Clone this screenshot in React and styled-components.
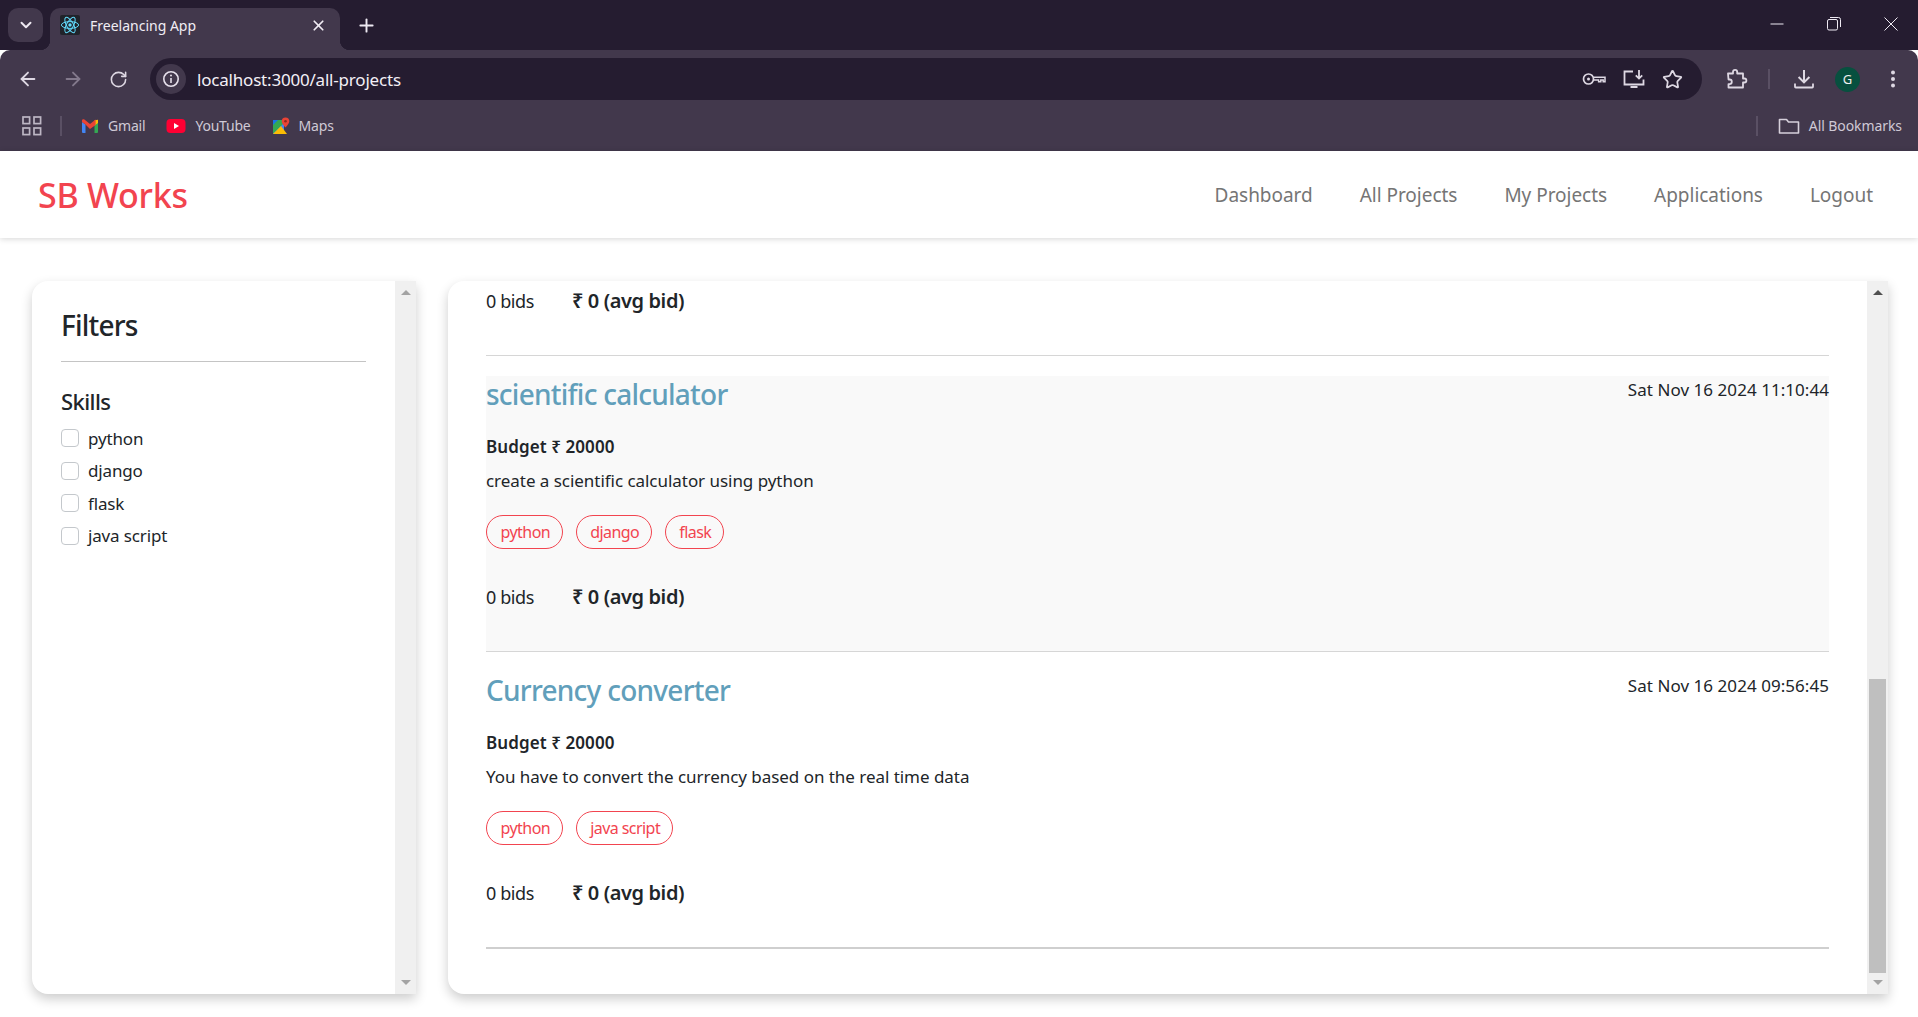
import React from "react";
import styled, { createGlobalStyle } from "styled-components";
import { ChevronDown, X, Plus, ArrowLeft, ArrowRight, RotateCw, Star } from "lucide-react";

const Global = createGlobalStyle`
  html, body { margin: 0; padding: 0; height: 100%; overflow: hidden; background: #fff; }
  * { box-sizing: border-box; }
  body { font-family: "Noto Sans", "Open Sans", sans-serif; color: #212529; }
`;

const Page = styled.div`width: 1918px; height: 1017px; display: flex; flex-direction: column; overflow: hidden;`;

const TabStrip = styled.div`height: 50px; background: #251c30; display: flex; align-items: flex-end; padding-left: 8px; flex: none;`;
const TabSearch = styled.div`width: 35px; height: 34px; margin-bottom: 8px; border-radius: 10px; background: #42384c; color: #eee9f2; display: flex; align-items: center; justify-content: center;`;
const Tab = styled.div`
  position: relative; width: 290px; height: 42px; margin-left: 7px; background: #42384c; border-radius: 10px 10px 0 0;
  display: flex; align-items: center; padding: 0 13px 8px 10px; color: #f1edf4; font-size: 14px;
  &::before, &::after { content: ""; position: absolute; bottom: 0; width: 10px; height: 10px; }
  &::before { left: -10px; background: radial-gradient(circle at 0 0, #251c30 10px, #42384c 10.5px); }
  &::after { right: -10px; background: radial-gradient(circle at 100% 0, #251c30 10px, #42384c 10.5px); }
`;
const Favicon = styled.div`width: 20px; height: 20px; background: #20232a; border-radius: 2px; margin-right: 10px; display: flex; flex: none;`;
const TabTitle = styled.span`flex: 1; letter-spacing: 0; white-space: nowrap;`;
const NewTab = styled.div`margin: 0 0 13px 14px; width: 24px; height: 24px; color: #eee9f2; display: flex; align-items: center; justify-content: center;`;
const WindowControls = styled.div`margin-left: auto; height: 50px; display: flex; align-items: center; gap: 43px; padding: 0 20px 2px 0; color: #efeaf3;`;

const Toolbar = styled.div`height: 50px; flex: none; background: #42384c; border-radius: 10px 10px 0 0; display: flex; align-items: center; padding: 8px 0 0 16px;`;
const NavIcon = styled.div`width: 24px; height: 24px; margin-right: 21px; display: flex; align-items: center; justify-content: center; color: ${p => p.$dim ? "#83798c" : "#ded8e3"};`;
const Omnibox = styled.div`width: 1552px; height: 42px; margin-left: -1px; background: #251c30; border-radius: 21px; display: flex; align-items: center; padding: 0 19px 0 6px; color: #d9d3de;`;
const InfoBadge = styled.div`width: 30px; height: 30px; border-radius: 50%; background: #42384c; display: flex; align-items: center; justify-content: center; flex: none;`;
const Url = styled.span`margin-left: 11px; font-size: 17px; color: #f3eff6; flex: 1; letter-spacing: -0.2px; white-space: nowrap;`;
const OmniIcons = styled.div`display: flex; align-items: center; gap: 16px;`;
const ToolIcons = styled.div`display: flex; align-items: center; color: #ded8e3; margin-left: 22px;`;
const VDivider = styled.div`width: 2px; height: 20px; background: #5a5064; flex: none; margin: ${p => p.$m};`;
const Spacer = styled.span`width: ${p => p.$w}px; flex: none;`;
const Avatar = styled.div`width: 25px; height: 25px; border-radius: 50%; background: #07503f; color: #f0f0f0; font-size: 13px; display: flex; align-items: center; justify-content: center;`;

const Bookmarks = styled.div`height: 51px; flex: none; background: #42384c; display: flex; align-items: center; padding: 0 16px 0 22px; color: #cfc9d5; font-size: 14px; letter-spacing: -0.2px;`;
const Bookmark = styled.div`display: flex; align-items: center; gap: 9px; margin-right: 21px; white-space: nowrap;`;
const BookmarkEnd = styled.div`margin-left: auto; display: flex; align-items: center; gap: 9px; white-space: nowrap; letter-spacing: -0.08px;`;

const Navbar = styled.nav`height: 87px; flex: none; background: #fff; box-shadow: 0 1px 6px rgba(0,0,0,.16); display: flex; align-items: center; justify-content: space-between; padding: 0 45px 0 38px; position: relative;`;
const Brand = styled.div`font-size: 34px; font-weight: 500; color: #f2444f; letter-spacing: -0.25px;`;
const NavLinks = styled.div`display: flex; gap: 47px;`;
const NavLink = styled.a`font-size: 19px; color: #757575; letter-spacing: -0.03px; white-space: nowrap;`;

const Main = styled.main`flex: 1; display: flex; gap: 32px; padding: 43px 30px 23px 32px; min-height: 0;`;
const Card = styled.section`display: flex; height: 713px; background: #fff; border-radius: 16px 0 0 16px; box-shadow: 0 5px 12px rgba(0,0,0,.2); overflow: hidden; width: ${p => p.$w}px; flex: none;`;
const CardBody = styled.div`flex: 1; min-width: 0; overflow: hidden; padding: ${p => p.$pad};`;
const Scrollbar = styled.div`width: 21px; flex: none; background: #f0f0f0; display: flex; flex-direction: column; padding: 2px 0;`;
const ArrowBtn = styled.div`height: 19px; flex: none; display: flex; align-items: center; justify-content: center;`;
const Arrow = styled.i`
  width: 0; height: 0; border-left: 5px solid transparent; border-right: 5px solid transparent;
  ${p => p.$down ? `border-top: 5px solid ${p.$c};` : `border-bottom: 5px solid ${p.$c};`}
`;
const Track = styled.div`flex: 1; display: flex; flex-direction: column; justify-content: flex-end; padding: 0 2px;`;
const Thumb = styled.div`height: 294px; background: #bfbfbf;`;

const FilterTitle = styled.h3`margin: 0; font-size: 28px; line-height: 34px; font-weight: 500; letter-spacing: -0.8px;`;
const Rule = styled.hr`margin: 19px 0 26px; border: 0; height: 1px; background: #c4c4c4;`;
const SkillHead = styled.h5`margin: 0 0 8px; font-size: 22px; line-height: 26px; font-weight: 500; letter-spacing: -0.6px;`;
const CheckRow = styled.label`display: flex; align-items: center; height: 32.5px; font-size: 17px; letter-spacing: -0.15px; gap: 9px;`;
const Check = styled.span`width: 18px; height: 18px; border: 1px solid #c4c8cc; border-radius: 4px; background: #fff; flex: none;`;

const BidsRow = styled.div`display: flex; align-items: center; height: 27px; gap: 38px;`;
const BidCount = styled.span`font-size: 18px; letter-spacing: -0.4px; white-space: nowrap;`;
const AvgBid = styled.b`font-size: 20px; font-weight: 600; letter-spacing: -0.4px; white-space: nowrap;`;
const ItemRule = styled.hr`margin: 41px 0 20px; border: 0; height: ${p => p.$h || 1}px; background: ${p => p.$c || "#d6d6d6"};`;
const Project = styled.article`background: ${p => p.$hover ? "#f9f9f9" : "transparent"};`;
const ProjectHead = styled.div`display: flex; justify-content: space-between; align-items: flex-start; height: 34px;`;
const ProjectTitle = styled.h3`margin: 0; font-size: 28px; line-height: 36px; font-weight: 500; color: #619fbb; letter-spacing: -0.75px; white-space: nowrap;`;
const ProjectDate = styled.span`font-size: 17px; line-height: 27px; letter-spacing: 0.05px; white-space: nowrap;`;
const Budget = styled.h6`margin: 25px 0 10px; font-size: 17px; line-height: 24px; font-weight: 600; letter-spacing: 0.08px;`;
const Desc = styled.p`margin: 0 0 22px; font-size: 17px; line-height: 24px; letter-spacing: -0.04px;`;
const Tags = styled.div`display: flex; gap: 12.5px; margin-bottom: 34px;`;
const Tag = styled.span`height: 34px; padding: 0 12px 0 13.5px; border: 1px solid #f2444f; border-radius: 17px; color: #f2444f; font-size: 16px; display: flex; align-items: center; letter-spacing: -0.55px; white-space: nowrap;`;

const Svg = ({ s = 20, vb = "0 0 24 24", children, ...r }) => <svg width={s} height={s} viewBox={vb} fill="none" {...r}>{children}</svg>;

const ReactIcon = () => (
  <Svg s={20} vb="0 0 20 20">
    <g stroke="#61dafb" strokeWidth="1" fill="none">
      <ellipse cx="10" cy="10" rx="8.6" ry="3.4" />
      <ellipse cx="10" cy="10" rx="8.6" ry="3.4" transform="rotate(60 10 10)" />
      <ellipse cx="10" cy="10" rx="8.6" ry="3.4" transform="rotate(120 10 10)" />
    </g>
    <circle cx="10" cy="10" r="1.7" fill="#61dafb" />
  </Svg>
);
const Info = () => (
  <Svg s={18} vb="0 0 18 18">
    <circle cx="9" cy="9" r="7.2" stroke="#e6e0eb" strokeWidth="1.6" />
    <path d="M9 8v5" stroke="#e6e0eb" strokeWidth="1.6" />
    <circle cx="9" cy="5.6" r="1" fill="#e6e0eb" />
  </Svg>
);
const KeyIcon = () => (
  <Svg s={24} vb="0 0 24 24">
    <circle cx="6.5" cy="12" r="5" stroke="#ded8e3" strokeWidth="1.7" />
    <circle cx="6.5" cy="12" r="1.5" fill="#ded8e3" />
    <path d="M11.5 10.2H23v4.6h-1.8V13h-2.4v1.8h-2.2V13h-5" stroke="#ded8e3" strokeWidth="1.5" />
  </Svg>
);
const InstallIcon = () => (
  <Svg s={24} vb="0 0 24 24">
    <path d="M11 4.5H2.5v13h19v-5M8.5 20h7" stroke="#ded8e3" strokeWidth="1.8" />
    <path d="M17 3v8.5M13.8 8.4l3.2 3.2 3.2-3.2" stroke="#ded8e3" strokeWidth="1.8" />
  </Svg>
);
const PuzzleIcon = () => (
  <Svg s={24} vb="0 0 24 24">
    <path d="M4 6.5h5V5a2.1 2.1 0 0 1 4.2 0v1.5H19v5h1.4a2 2 0 0 1 0 4H19v5H4.5v-3.4h1a2.3 2.3 0 0 0 0-4.6h-1z" stroke="#ded8e3" strokeWidth="1.8" strokeLinejoin="round" />
  </Svg>
);
const DownloadBar = () => (
  <Svg s={24} vb="0 0 24 24">
    <path d="M12 3v12M6.6 10l5.4 5.4 5.4-5.4" stroke="#ded8e3" strokeWidth="2" />
    <path d="M3 16.5v3.2a.8.8 0 0 0 .8.8h16.4a.8.8 0 0 0 .8-.8v-3.2" stroke="#ded8e3" strokeWidth="1.8" />
  </Svg>
);
const DotsIcon = () => (
  <Svg s={24} vb="0 0 24 24">
    <circle cx="12" cy="5.5" r="2" fill="#ded8e3" />
    <circle cx="12" cy="12" r="2" fill="#ded8e3" />
    <circle cx="12" cy="18.5" r="2" fill="#ded8e3" />
  </Svg>
);
const AppsIcon = () => (
  <Svg s={20} vb="0 0 20 20">
    {[[1, 1], [12, 1], [1, 12], [12, 12]].map(([x, y]) => (
      <rect key={x + "-" + y} x={x} y={y} width="6.6" height="6.6" stroke="#bdb6c4" strokeWidth="1.7" />
    ))}
  </Svg>
);
const GmailIcon = () => (
  <Svg s={18} vb="0 0 18 18">
    <path d="M1 5v10a1 1 0 0 0 1 1h2.5V7.5z" fill="#4285f4" />
    <path d="M17 5v10a1 1 0 0 1-1 1h-2.5V7.5z" fill="#34a853" />
    <path d="M13.5 3.2 17 2.8V6l-3.5 2.5z" fill="#fbbc04" />
    <path d="M4.5 7.5 1 5V3.5C1 2.3 2.5 1.8 3.4 2.5L9 7l5.6-4.5V8L9 12z" fill="#ea4335" />
  </Svg>
);
const YouTubeIcon = () => (
  <Svg s={20} vb="0 0 20 20">
    <rect x="0.5" y="3" width="19" height="14" rx="4" fill="#ff0033" />
    <path d="M8 7v6l5-3z" fill="#fff" />
  </Svg>
);
const MapsIcon = () => (
  <Svg s={18} vb="0 0 18 18">
    <path d="M1 3h11v14H1z" fill="#34a853" />
    <path d="M1 17 12 6v11z" fill="#4285f4" />
    <path d="M1 3h5L1 8z" fill="#1a73e8" />
    <path d="M1 17 9 9l6 8z" fill="#fbbc04" />
    <path d="M13.5 0.5a3.8 3.8 0 0 1 3.8 3.8c0 2.6-3.8 6.2-3.8 6.2S9.7 6.9 9.7 4.3a3.8 3.8 0 0 1 3.8-3.8z" fill="#ea4335" />
    <circle cx="13.5" cy="4.3" r="1.3" fill="#8c2b20" />
  </Svg>
);
const FolderIcon = () => (
  <Svg s={22} vb="0 0 22 22">
    <path d="M1.5 4.5h7l2 2.5h10v11h-19z" stroke="#d6d0db" strokeWidth="1.6" strokeLinejoin="round" />
  </Svg>
);
const MinimizeIcon = () => <Svg s={14} vb="0 0 14 14"><path d="M0.5 7h13" stroke="#efeaf3" strokeWidth="1" /></Svg>;
const RestoreIcon = () => (
  <Svg s={14} vb="0 0 14 14">
    <rect x="0.5" y="2.5" width="10" height="10.5" rx="1.5" stroke="#efeaf3" />
    <path d="M3 0.5h8.5a2 2 0 0 1 2 2V10" stroke="#efeaf3" />
  </Svg>
);
const CloseIcon = () => <Svg s={14} vb="0 0 14 14"><path d="M0.5 0.5l13 13M13.5 0.5l-13 13" stroke="#efeaf3" strokeWidth="1" /></Svg>;

const BarSide = ({ thumb, dark }) => (
  <Scrollbar>
    <ArrowBtn><Arrow $c={dark ? "#505050" : "#a3a3a3"} /></ArrowBtn>
    <Track>{thumb && <Thumb />}</Track>
    <ArrowBtn><Arrow $down $c="#a3a3a3" /></ArrowBtn>
  </Scrollbar>
);

const Bids = () => (
  <BidsRow>
    <BidCount>0 bids</BidCount>
    <AvgBid>₹ 0 (avg bid)</AvgBid>
  </BidsRow>
);

const projects = [
  { title: "scientific calculator", date: "Sat Nov 16 2024 11:10:44", desc: "create a scientific calculator using python", tags: ["python", "django", "flask"], hover: true },
  { title: "Currency converter", date: "Sat Nov 16 2024 09:56:45", desc: "You have to convert the currency based on the real time data", tags: ["python", "java script"], last: true },
];

export default function App() {
  return (
    <Page>
      <Global />
      <TabStrip>
        <TabSearch><ChevronDown size={18} strokeWidth={2.6} /></TabSearch>
        <Tab>
          <Favicon><ReactIcon /></Favicon>
          <TabTitle>Freelancing App</TabTitle>
          <X size={17} strokeWidth={2.4} />
        </Tab>
        <NewTab><Plus size={21} strokeWidth={2.2} /></NewTab>
        <WindowControls><MinimizeIcon /><RestoreIcon /><CloseIcon /></WindowControls>
      </TabStrip>
      <Toolbar>
        <NavIcon><ArrowLeft size={22} strokeWidth={2} /></NavIcon>
        <NavIcon $dim><ArrowRight size={22} strokeWidth={2} /></NavIcon>
        <NavIcon><RotateCw size={19} strokeWidth={2} /></NavIcon>
        <Omnibox>
          <InfoBadge><Info /></InfoBadge>
          <Url>localhost:3000/all-projects</Url>
          <OmniIcons>
            <KeyIcon />
            <InstallIcon />
            <Star size={21} strokeWidth={2} color="#ded8e3" />
          </OmniIcons>
        </Omnibox>
        <ToolIcons>
          <PuzzleIcon />
          <VDivider $m="0 22px 0 20px" />
          <DownloadBar />
          <Spacer $w={19} />
          <Avatar>G</Avatar>
          <Spacer $w={21} />
          <DotsIcon />
        </ToolIcons>
      </Toolbar>
      <Bookmarks>
        <AppsIcon />
        <VDivider $m="0 19px 0 18px" />
        <Bookmark><GmailIcon />Gmail</Bookmark>
        <Bookmark><YouTubeIcon />YouTube</Bookmark>
        <Bookmark><MapsIcon />Maps</Bookmark>
        <BookmarkEnd>
          <VDivider $m="0 11px 0 0" />
          <FolderIcon />
          All Bookmarks
        </BookmarkEnd>
      </Bookmarks>
      <Navbar>
        <Brand>SB Works</Brand>
        <NavLinks>
          {["Dashboard", "All Projects", "My Projects", "Applications", "Logout"].map(l => <NavLink key={l}>{l}</NavLink>)}
        </NavLinks>
      </Navbar>
      <Main>
        <Card $w={384}>
          <CardBody $pad="27px 29px 0">
            <FilterTitle>Filters</FilterTitle>
            <Rule />
            <SkillHead>Skills</SkillHead>
            {["python", "django", "flask", "java script"].map(s => (
              <CheckRow key={s}><Check />{s}</CheckRow>
            ))}
          </CardBody>
          <BarSide />
        </Card>
        <Card $w={1440}>
          <CardBody $pad="6px 38px 0">
            <Bids />
            <ItemRule />
            {projects.map(p => (
              <Project key={p.title} $hover={p.hover}>
                <ProjectHead>
                  <ProjectTitle>{p.title}</ProjectTitle>
                  <ProjectDate>{p.date}</ProjectDate>
                </ProjectHead>
                <Budget>Budget ₹ 20000</Budget>
                <Desc>{p.desc}</Desc>
                <Tags>{p.tags.map(t => <Tag key={t}>{t}</Tag>)}</Tags>
                <Bids />
                <ItemRule $h={p.last ? 2 : 1} $c={p.last ? "#cfcfcf" : "#d6d6d6"} />
              </Project>
            ))}
          </CardBody>
          <BarSide thumb dark />
        </Card>
      </Main>
    </Page>
  );
}
